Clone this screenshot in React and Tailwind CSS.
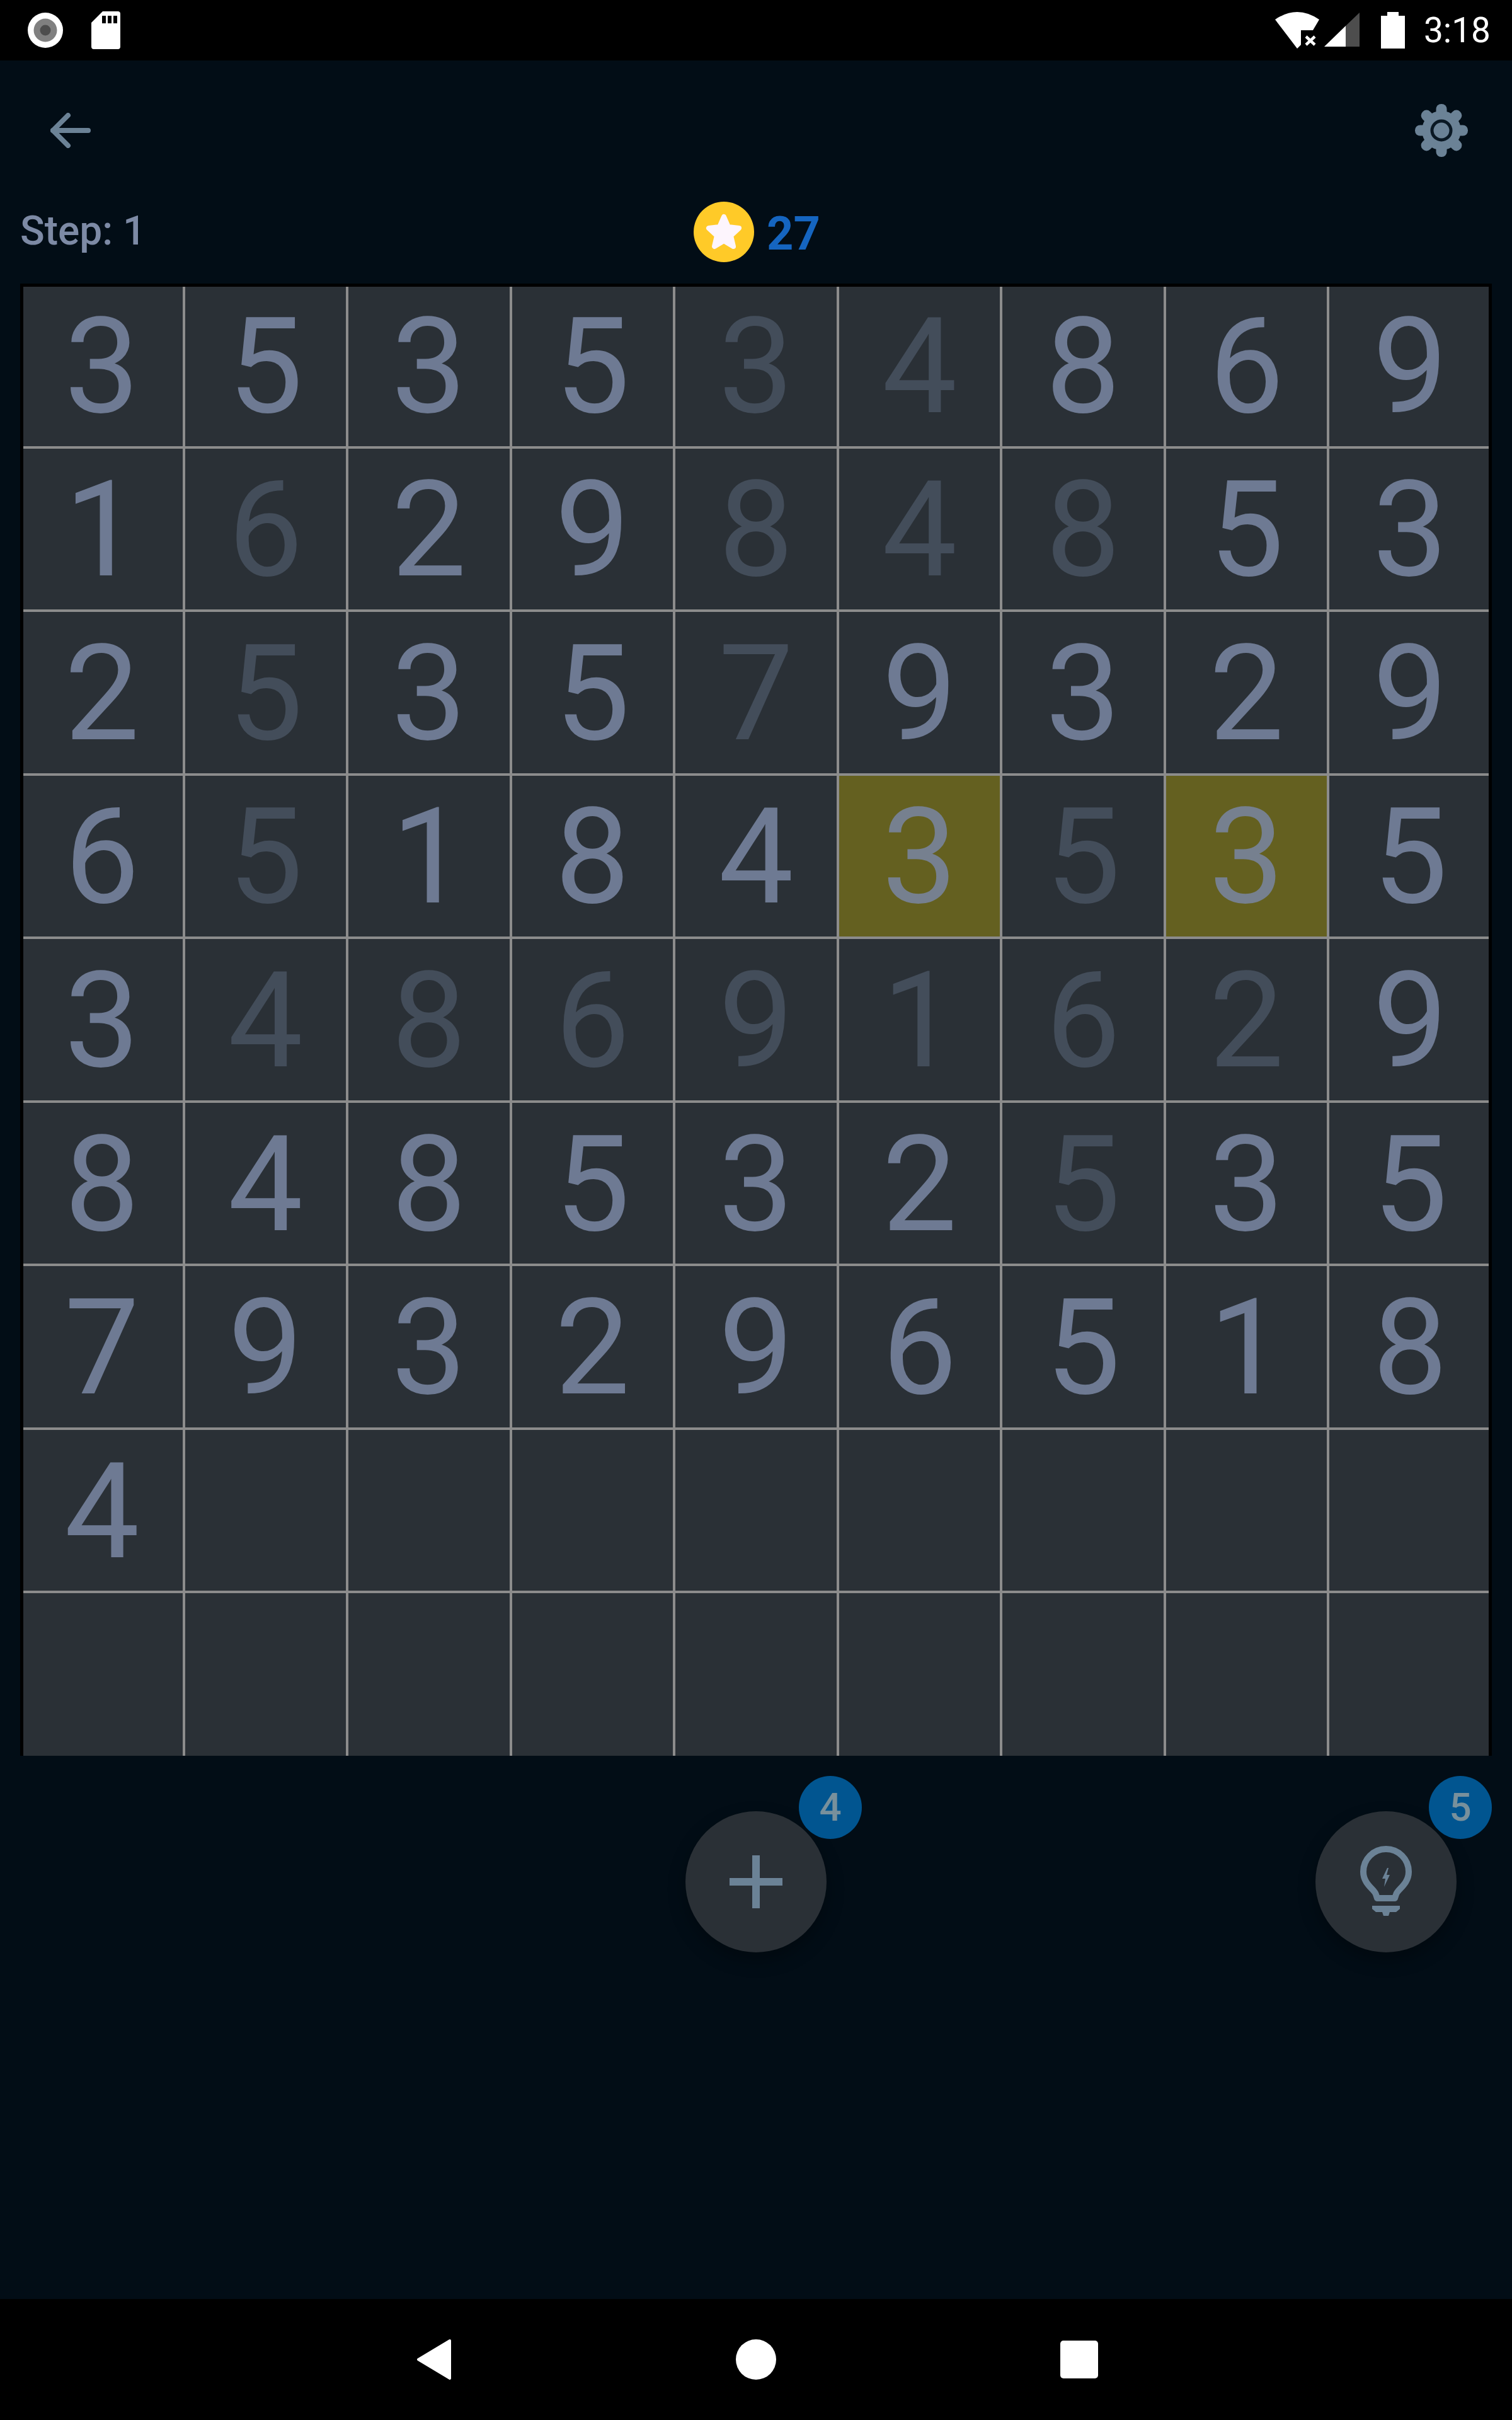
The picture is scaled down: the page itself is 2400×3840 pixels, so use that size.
import React from 'react';

const rows = [
  ['3', '5', '3', '5', '3f', '4f', '8', '6', '9'],
  ['1', '6f', '2', '9', '8f', '4f', '8f', '5', '3'],
  ['2', '5f', '3', '5', '7f', '9', '3', '2', '9'],
  ['6', '5f', '1', '8', '4', '3h', '5f', '3h', '5'],
  ['3', '4f', '8f', '6f', '9f', '1f', '6f', '2f', '9'],
  ['8', '4', '8', '5', '3', '2', '5f', '3', '5'],
  ['7', '9', '3', '2', '9', '6', '5', '1', '8'],
  ['4', '', '', '', '', '', '', '', ''],
  ['', '', '', '', '', '', '', '', ''],
];

const Cell = ({ value, lastRow }) => {
  const digit = value.charAt(0);
  const mark = value.charAt(1);
  return (
    <div
      className={`flex items-center justify-center border-x-2 border-x-[#8c8c8c] pt-[4px] ${
        lastRow ? 'border-t-2 border-t-[#8c8c8c]' : 'border-y-2 border-y-[#8c8c8c]'
      } ${mark === 'h' ? 'bg-[#646020] text-[#76808f]' : 'bg-[#2a3036]'} ${
        mark === 'f' ? 'text-[#434d5a]' : ''
      } ${mark === '' ? 'text-[#6e7a93]' : ''}`}
    >
      {digit}
    </div>
  );
};

const Board = () => (
  <div className="relative mx-[32px] grid h-[2336px] w-[2336px] grid-cols-9 grid-rows-9 text-[212px] leading-none">
    {rows.map((row, r) =>
      row.map((value, c) => <Cell key={`${r}-${c}`} value={value} lastRow={r === 8} />)
    )}
    <div className="pointer-events-none absolute inset-0 border-x-[5px] border-t-[5px] border-x-black border-t-black" />
  </div>
);

const StatusBar = () => (
  <div className="flex h-[96px] items-center justify-between bg-black pl-[44px] pr-[34px]">
    <div className="flex items-center gap-[45px]">
      <svg width="56" height="56" viewBox="0 0 56 56">
        <circle cx="28" cy="28" r="28" fill="#fff" />
        <circle cx="28" cy="28" r="18.5" fill="#808080" />
        <circle cx="28" cy="28" r="8.5" fill="#4d4d4d" />
      </svg>
      <svg width="46" height="60" viewBox="0 0 46 60">
        <path
          d="M18 0H42a4 4 0 0 1 4 4V56a4 4 0 0 1-4 4H4a4 4 0 0 1-4-4V18ZM17 7V19H23V7ZM26 7V19H32V7ZM35 7V19H41V7Z"
          fill="#fff"
          fillRule="evenodd"
        />
      </svg>
    </div>
    <div className="flex items-center">
      <svg width="70" height="58" viewBox="0 0 70 58">
        <path d="M0 12Q35-12 70 12L60 29H41V52L35 58Z" fill="#fff" />
        <path d="M49 39L63 52M63 39L49 52" stroke="#fff" strokeWidth="4.5" />
      </svg>
      <svg className="ml-[8px]" width="56" height="56" viewBox="0 0 56 56">
        <path d="M0 54L34 21V54Z" fill="#fff" />
        <path d="M34 21L56 0V54H34Z" fill="#4d4d4d" />
      </svg>
      <svg className="ml-[34px]" width="38" height="58" viewBox="0 0 38 58">
        <path d="M10 0H28V6H38V58H0V6H10Z" fill="#fff" />
      </svg>
      <span className="ml-[30px] text-[55px] leading-none text-white">3:18</span>
    </div>
  </div>
);

const BackArrow = () => (
  <svg width="64" height="56" viewBox="0 0 64 56" fill="none" stroke="#6b8296" strokeWidth="8" strokeLinecap="round" strokeLinejoin="round">
    <path d="M28 4L4 28L28 52" />
    <path d="M4 28H60" />
  </svg>
);

const Gear = () => (
  <svg width="84" height="84" viewBox="0 0 84 84">
    <circle cx="42" cy="42" r="31" fill="#6b8296" />
    {[0, 45, 90, 135, 180, 225, 270, 315].map((deg) => (
      <rect key={deg} x="33.5" y="0" width="17" height="24" rx="8" fill="#6b8296" transform={`rotate(${deg} 42 42)`} />
    ))}
    <circle cx="42" cy="42" r="15" fill="none" stroke="#0a1824" strokeWidth="5" />
  </svg>
);

const Coin = () => (
  <div className="flex h-[96px] w-[96px] items-center justify-center rounded-full bg-[#ffca28]">
    <svg width="60" height="58" viewBox="0 0 60 58">
      <path
        d="M30 5L37 21L54 23L41 35L45 52L30 43L15 52L19 35L6 23L23 21Z"
        fill="#fdf5fd"
        stroke="#fdf5fd"
        strokeWidth="8"
        strokeLinejoin="round"
      />
    </svg>
  </div>
);

const Fab = ({ count, children }) => (
  <div className="relative flex h-[224px] w-[224px] items-center justify-center rounded-full bg-[#2a3036] shadow-[0_12px_28px_rgba(0,0,0,0.3)]">
    {children}
    <div className="absolute left-[180px] top-[-56px] flex h-[100px] w-[100px] items-center justify-center rounded-full bg-[#015590] text-[62px] font-medium leading-none text-[#78909c]">
      {count}
    </div>
  </div>
);

const Plus = () => (
  <svg width="84" height="84" viewBox="0 0 84 84">
    <path d="M36 0H48V36H84V48H48V84H36V48H0V36H36Z" fill="#6b8296" />
  </svg>
);

const Bulb = () => (
  <svg width="96" height="120" viewBox="0 0 96 120">
    <path
      d="M34 86L32 80C30 72 12 64 12 44A36 36 0 0 1 84 44C84 64 66 72 64 80L62 86Z"
      fill="none"
      stroke="#6b8296"
      strokeWidth="10"
      strokeLinejoin="round"
    />
    <path d="M26 98H70V103L64 108H54L52 114H44L42 108H32L26 103Z" fill="#6b8296" />
    <path d="M50 38L42 55H47L45 68L54 49H49L52 38Z" fill="#6b8296" />
  </svg>
);

const NavBar = () => (
  <div className="flex h-[192px] items-center justify-center gap-[451px] bg-black pl-[4px]">
    <svg width="56" height="64" viewBox="0 0 56 64">
      <path d="M53 2L3 32L53 62Z" fill="#fff" stroke="#fff" strokeWidth="4" strokeLinejoin="round" />
    </svg>
    <div className="h-[64px] w-[64px] rounded-full bg-white" />
    <div className="h-[60px] w-[60px] rounded-[5px] bg-white" />
  </div>
);

export default function App() {
  return (
    <div className="flex h-[3840px] w-[2400px] flex-col bg-[#020d16] font-['Roboto',sans-serif]">
      <StatusBar />

      <div className="flex h-[222px] items-center justify-between pl-[80px] pr-[70px]">
        <BackArrow />
        <Gear />
      </div>

      <div className="grid h-[132px] grid-cols-[1fr_auto_1fr] items-center pb-[32px]">
        <span className="mb-[3px] pl-[32px] text-[64px] font-medium leading-none text-[#7d8aa5]">Step: 1</span>
        <div className="flex items-center gap-[20px]">
          <Coin />
          <span className="mt-[6px] w-[82px] text-[74px] font-bold leading-none text-[#1565c0]">27</span>
        </div>
        <div />
      </div>

      <Board />

      <div className="mt-[88px] grid grid-cols-[1fr_auto_1fr]">
        <div />
        <Fab count="4">
          <Plus />
        </Fab>
        <div className="flex justify-end pr-[88px]">
          <Fab count="5">
            <Bulb />
          </Fab>
        </div>
      </div>

      <div className="flex-1" />
      <NavBar />
    </div>
  );
}
